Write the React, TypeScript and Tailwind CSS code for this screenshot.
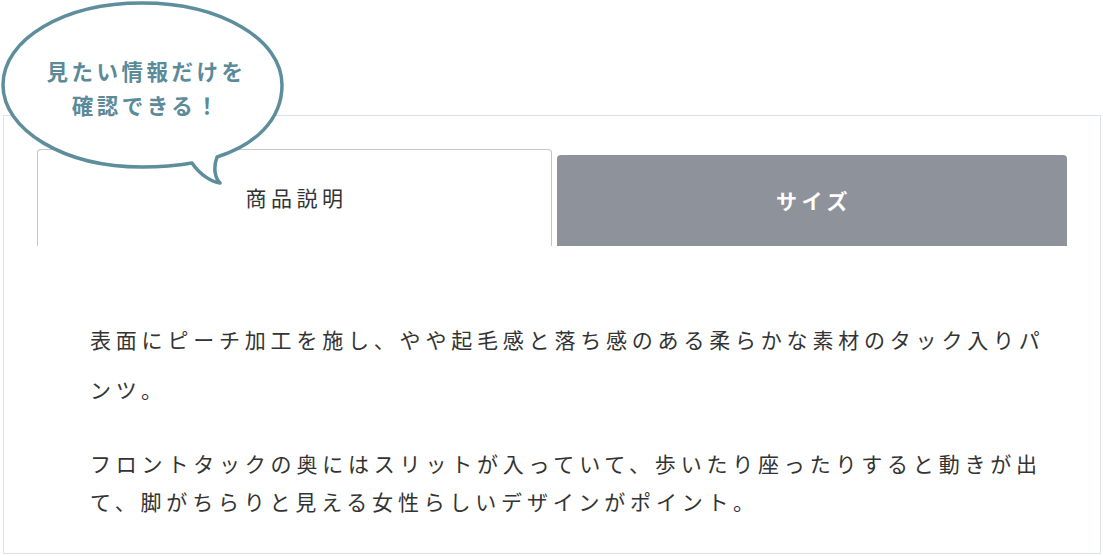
import React from 'react'

const jp = "font-['Noto_Sans_CJK_JP','Noto_Sans',sans-serif]"

function Bubble() {
  return (
    <div className="absolute left-0 top-0 w-[290px] h-[192px]">
      <svg className="absolute inset-0" width="290" height="192" viewBox="0 0 290 192">
        <path
          d="M192 163 C 175 166, 160 167, 142 167 C 64 167, 3 130, 3 85 C 3 39, 64 3, 142 3 C 220 3, 282 39, 282 85 C 282 120, 255 145, 217 157 C 213 168, 215 178, 220 183 C 212 182, 200 175, 192 163 Z"
          fill="#ffffff"
          stroke="#5e8d9b"
          strokeWidth="3.5"
          strokeLinejoin="round"
        />
      </svg>
      <div className={`relative pt-[54px] text-center text-[21.5px] leading-[34px] font-bold tracking-[3.5px] text-[#5b8a99] ${jp}`}>
        <div className="pl-[3px]">見たい情報だけを</div>
        <div className="pl-[3px]">確認できる！</div>
      </div>
    </div>
  )
}

export default function App() {
  return (
    <div className={`relative w-[1103px] h-[556px] bg-white overflow-hidden ${jp}`}>
      <div className="ml-[3px] mt-[115px] w-[1098px] h-[439px] border border-[#dde2e8] px-[33px] pt-[33px]">
        {/* Tabs */}
        <div className="flex items-end gap-[5px] h-[97px]">
          <div className="w-[516px] h-[97px] border border-b-0 border-[#c6c6c6] rounded-t-[4px] bg-white flex items-center justify-center text-[21px] tracking-[4.5px] text-[#333] pl-[4px]">
            商品説明
          </div>
          <div className="w-[511px] h-[91px] bg-[#8e929b] rounded-t-[4px] flex items-center justify-center text-[21px] tracking-[4.5px] font-semibold text-white pl-[4px]">
            サイズ
          </div>
        </div>

        {/* Content */}
        <div className="pl-[53px] pt-[68px] w-[1010px] text-[21px] tracking-[4.8px] leading-[50px] text-[#333]">
          <p>表面にピーチ加工を施し、やや起毛感と落ち感のある柔らかな素材のタック入りパンツ。</p>
          <p className="mt-[30px] leading-[38px]">
            フロントタックの奥にはスリットが入っていて、歩いたり座ったりすると動きが出て、脚がちらりと見える女性らしいデザインがポイント。
          </p>
        </div>
      </div>
      <Bubble />
    </div>
  )
}
